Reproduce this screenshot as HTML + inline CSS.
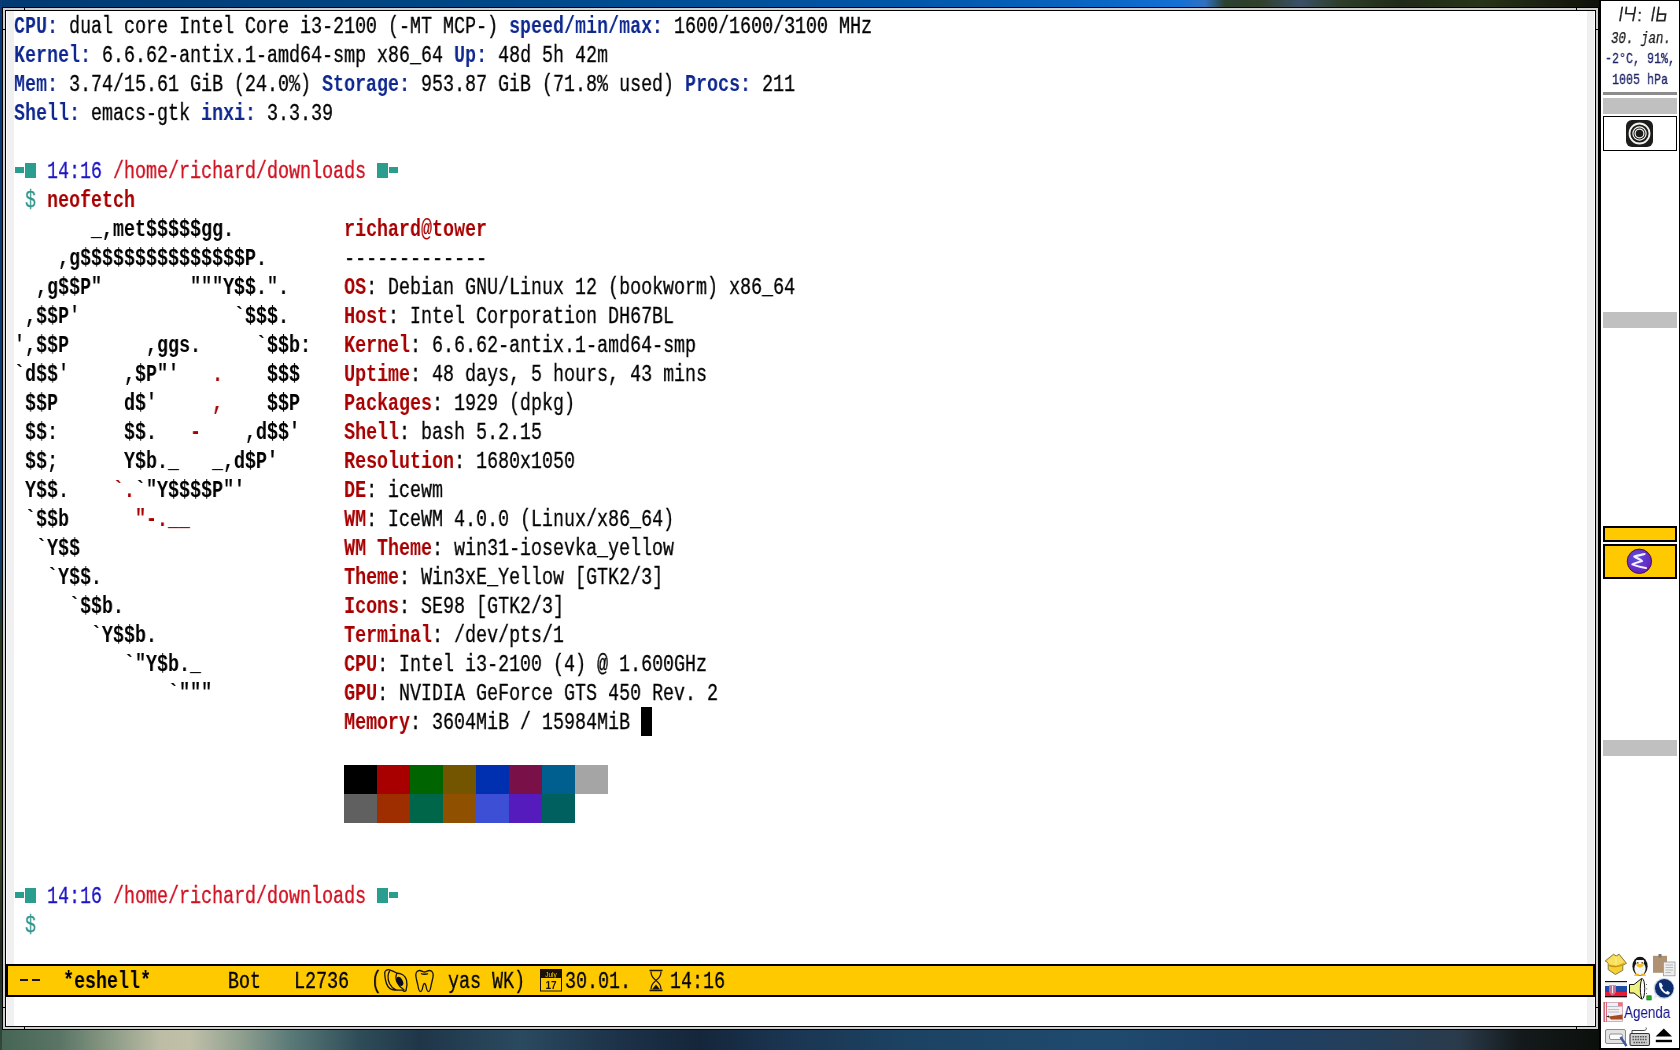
<!DOCTYPE html>
<html><head><meta charset="utf-8"><style>
*{margin:0;padding:0;box-sizing:border-box}
html,body{width:1680px;height:1050px;overflow:hidden;background:#1b2b3b;position:relative}
.abs{position:absolute}
.row{position:absolute;left:14px;height:29px;font-family:"Liberation Mono",monospace;font-size:23.3px;line-height:29px;white-space:pre;transform:scaleX(0.78684);transform-origin:0 0;color:#000;will-change:transform;-webkit-text-stroke:0.3px currentColor}
.lb{color:#0f2890;font-weight:bold}
.n{color:#000}
.tq{color:#26a08c}
.tb{color:#1c14c4}
.pr{color:#d01020}
.dl{color:#2e9488}
.rb{color:#a80000;font-weight:bold}
.ab{color:#000;font-weight:bold}
.pt{font-family:"Liberation Mono",monospace;line-height:18px;white-space:pre;transform-origin:0 0;will-change:transform}
.ar{color:#a80000;font-weight:bold}
.lb,.rb,.ab,.ar,.bd{-webkit-text-stroke:0}
</style></head><body>

<div class="abs" style="left:0;top:0;width:1680px;height:7px;background:linear-gradient(90deg,#023a72 0,#004888 500px,#0056a8 900px,#0a66c4 1100px,#1470d4 1180px,#3070c0 1205px,#2a4030 1225px,#30402a 1260px,#3a5068 1300px,#2e3e2a 1340px,#202a18 1400px,#283418 1480px,#1a2010 1550px,#0e100a 1600px)"></div>
<div class="abs" style="left:0;top:1030px;width:1600px;height:20px;background:linear-gradient(90deg,#456554 0,#5a7565 60px,#8a9a85 110px,#bdbda5 160px,#c0c0a8 190px,#90a090 240px,#5a7a78 290px,#2e4c58 360px,#1f3648 420px,#2a4a60 520px,#1c3248 620px,#14263a 700px,#1a3450 780px,#1c4262 900px,#1f4a6e 1100px,#1e4065 1250px,#243e58 1380px,#2a3a4a 1460px,#141a1c 1520px,#0c100c 1600px)"></div>
<div class="abs" style="left:0;top:0;width:2px;height:1050px;background:linear-gradient(180deg,#0a3a78 0,#0a3a70 550px,#2a3a18 650px,#3a4a20 850px,#202a20 950px,#34483e 1050px)"></div>


<div class="abs" style="left:2px;top:7px;width:1597px;height:1023px;background:#000"></div>
<div class="abs" style="left:3px;top:8px;width:1595px;height:1021px;background:#cfcfcf"></div>
<div class="abs" style="left:5px;top:10px;width:1591px;height:1017px;background:#000"></div>
<div class="abs" style="left:6px;top:11px;width:1589px;height:1015px;background:#fff"></div>
<div class="abs" style="left:24px;top:7px;width:1px;height:4px;background:#000"></div>
<div class="abs" style="left:1576px;top:7px;width:1px;height:4px;background:#000"></div>
<div class="abs" style="left:24px;top:1026px;width:1px;height:4px;background:#000"></div>
<div class="abs" style="left:1576px;top:1026px;width:1px;height:4px;background:#000"></div>
<div class="abs" style="left:2px;top:29px;width:4px;height:1px;background:#000"></div>
<div class="abs" style="left:1595px;top:29px;width:4px;height:1px;background:#000"></div>
<div class="abs" style="left:2px;top:1007px;width:4px;height:1px;background:#000"></div>
<div class="abs" style="left:1595px;top:1007px;width:4px;height:1px;background:#000"></div>
<div class="abs" style="left:7px;top:11px;width:7px;height:953px;background:#f0f0f0"></div>
<div class="abs" style="left:1587px;top:11px;width:7px;height:953px;background:#f0f0f0"></div>
<div class="abs" style="left:7px;top:997px;width:7px;height:29px;background:#f0f0f0"></div>
<div class="abs" style="left:1587px;top:997px;width:7px;height:29px;background:#f0f0f0"></div>
<div class="abs" style="left:641px;top:707px;width:11px;height:29px;background:#000"></div>

<div class="row" style="top:13px"><span class="lb">CPU:</span><span class="n"> dual core Intel Core i3-2100 (-MT MCP-) </span><span class="lb">speed/min/max:</span><span class="n"> 1600/1600/3100 MHz</span></div>
<div class="row" style="top:42px"><span class="lb">Kernel:</span><span class="n"> 6.6.62-antix.1-amd64-smp x86_64 </span><span class="lb">Up:</span><span class="n"> 48d 5h 42m</span></div>
<div class="row" style="top:71px"><span class="lb">Mem:</span><span class="n"> 3.74/15.61 GiB (24.0%) </span><span class="lb">Storage:</span><span class="n"> 953.87 GiB (71.8% used) </span><span class="lb">Procs:</span><span class="n"> 211</span></div>
<div class="row" style="top:100px"><span class="lb">Shell:</span><span class="n"> emacs-gtk </span><span class="lb">inxi:</span><span class="n"> 3.3.39</span></div>
<div class="row" style="top:158px"><span class="n">   </span><span class="tb">14:16</span><span class="n"> </span><span class="pr">/home/richard/downloads</span></div>
<div class="row" style="top:187px"><span class="dl"> $ </span><span class="rb">neofetch</span></div>
<div class="row" style="top:216px"><span class="ab">       _,met$$$$$gg.</span><span class="n">          </span><span class="rb">richard@tower</span></div>
<div class="row" style="top:245px"><span class="ab">    ,g$$$$$$$$$$$$$$$P.</span><span class="n">       </span><span class="n">-------------</span></div>
<div class="row" style="top:274px"><span class="ab">  ,g$$P"        """Y$$.".</span><span class="n">     </span><span class="rb">OS</span><span class="n">: Debian GNU/Linux 12 (bookworm) x86_64</span></div>
<div class="row" style="top:303px"><span class="ab"> ,$$P'              `$$$.</span><span class="n">     </span><span class="rb">Host</span><span class="n">: Intel Corporation DH67BL</span></div>
<div class="row" style="top:332px"><span class="ab">',$$P       ,ggs.     `$$b:</span><span class="n">   </span><span class="rb">Kernel</span><span class="n">: 6.6.62-antix.1-amd64-smp</span></div>
<div class="row" style="top:361px"><span class="ab">`d$$'     ,$P"'   </span><span class="ar">.</span><span class="ab">    $$$</span><span class="n">    </span><span class="rb">Uptime</span><span class="n">: 48 days, 5 hours, 43 mins</span></div>
<div class="row" style="top:390px"><span class="ab"> $$P      d$'     </span><span class="ar">,</span><span class="ab">    $$P</span><span class="n">    </span><span class="rb">Packages</span><span class="n">: 1929 (dpkg)</span></div>
<div class="row" style="top:419px"><span class="ab"> $$:      $$.   </span><span class="ar">-</span><span class="ab">    ,d$$'</span><span class="n">    </span><span class="rb">Shell</span><span class="n">: bash 5.2.15</span></div>
<div class="row" style="top:448px"><span class="ab"> $$;      Y$b._   _,d$P'</span><span class="n">      </span><span class="rb">Resolution</span><span class="n">: 1680x1050</span></div>
<div class="row" style="top:477px"><span class="ab"> Y$$.    </span><span class="ar">`.</span><span class="ab">`"Y$$$$P"'</span><span class="n">         </span><span class="rb">DE</span><span class="n">: icewm</span></div>
<div class="row" style="top:506px"><span class="ab"> `$$b      </span><span class="ar">"-.__</span><span class="n">              </span><span class="rb">WM</span><span class="n">: IceWM 4.0.0 (Linux/x86_64)</span></div>
<div class="row" style="top:535px"><span class="ab">  `Y$$</span><span class="n">                        </span><span class="rb">WM Theme</span><span class="n">: win31-iosevka_yellow</span></div>
<div class="row" style="top:564px"><span class="ab">   `Y$$.</span><span class="n">                      </span><span class="rb">Theme</span><span class="n">: Win3xE_Yellow [GTK2/3]</span></div>
<div class="row" style="top:593px"><span class="ab">     `$$b.</span><span class="n">                    </span><span class="rb">Icons</span><span class="n">: SE98 [GTK2/3]</span></div>
<div class="row" style="top:622px"><span class="ab">       `Y$$b.</span><span class="n">                 </span><span class="rb">Terminal</span><span class="n">: /dev/pts/1</span></div>
<div class="row" style="top:651px"><span class="ab">          `"Y$b._</span><span class="n">             </span><span class="rb">CPU</span><span class="n">: Intel i3-2100 (4) @ 1.600GHz</span></div>
<div class="row" style="top:680px"><span class="ab">              `"""</span><span class="n">            </span><span class="rb">GPU</span><span class="n">: NVIDIA GeForce GTS 450 Rev. 2</span></div>
<div class="row" style="top:709px"><span class="n">                              </span><span class="rb">Memory</span><span class="n">: 3604MiB / 15984MiB </span></div>
<div class="row" style="top:883px"><span class="n">   </span><span class="tb">14:16</span><span class="n"> </span><span class="pr">/home/richard/downloads</span></div>
<div class="row" style="top:912px"><span class="dl"> $</span></div>
<div class="abs" style="left:15px;top:167px;width:9px;height:6px;background:#2a9d8f"></div>
<div class="abs" style="left:25px;top:163px;width:11px;height:15px;background:#2a9d8f"></div>
<div class="abs" style="left:377px;top:163px;width:11px;height:15px;background:#2a9d8f"></div>
<div class="abs" style="left:389px;top:167px;width:9px;height:6px;background:#2a9d8f"></div>
<div class="abs" style="left:15px;top:892px;width:9px;height:6px;background:#2a9d8f"></div>
<div class="abs" style="left:25px;top:888px;width:11px;height:15px;background:#2a9d8f"></div>
<div class="abs" style="left:377px;top:888px;width:11px;height:15px;background:#2a9d8f"></div>
<div class="abs" style="left:389px;top:892px;width:9px;height:6px;background:#2a9d8f"></div>
<div class="abs" style="left:344px;top:765px;width:33px;height:29px;background:#000000"></div>
<div class="abs" style="left:377px;top:765px;width:33px;height:29px;background:#a80000"></div>
<div class="abs" style="left:410px;top:765px;width:33px;height:29px;background:#006400"></div>
<div class="abs" style="left:443px;top:765px;width:33px;height:29px;background:#735500"></div>
<div class="abs" style="left:476px;top:765px;width:33px;height:29px;background:#0030b0"></div>
<div class="abs" style="left:509px;top:765px;width:33px;height:29px;background:#7a1048"></div>
<div class="abs" style="left:542px;top:765px;width:33px;height:29px;background:#005f8f"></div>
<div class="abs" style="left:575px;top:765px;width:33px;height:29px;background:#a5a5a5"></div>
<div class="abs" style="left:344px;top:794px;width:33px;height:29px;background:#606060"></div>
<div class="abs" style="left:377px;top:794px;width:33px;height:29px;background:#9e2d00"></div>
<div class="abs" style="left:410px;top:794px;width:33px;height:29px;background:#00664a"></div>
<div class="abs" style="left:443px;top:794px;width:33px;height:29px;background:#8f5000"></div>
<div class="abs" style="left:476px;top:794px;width:33px;height:29px;background:#3d4fd5"></div>
<div class="abs" style="left:509px;top:794px;width:33px;height:29px;background:#551bbd"></div>
<div class="abs" style="left:542px;top:794px;width:33px;height:29px;background:#005f5f"></div>


<div class="abs" style="left:6px;top:964px;width:1589px;height:33px;background:#ffc900;border:2px solid #000"></div>
<div class="row" style="left:8px;top:968px">     <span class="bd" style="font-weight:bold">*eshell*</span>       Bot   L2736  (</div>
<div class="row" style="left:448px;top:968px">yas WK)</div>
<div class="abs" style="left:20px;top:979px;width:8px;height:2px;background:#1a1208"></div>
<div class="abs" style="left:32px;top:979px;width:8px;height:2px;background:#1a1208"></div>
<div class="row" style="left:565px;top:968px">30.01.</div>
<div class="row" style="left:670px;top:968px">14:16</div>

<svg class="abs" style="left:370px;top:964px" width="310" height="33" viewBox="370 964 310 33">
 <g fill="none" stroke="#1a1208" stroke-width="1.3" stroke-linejoin="round" stroke-linecap="round">
  <!-- shell -->
  <path d="M385 971.5 C386.5 969.3 389 969.3 391 970.3 C393 971 395 972 397 973.3 C401 973 405 975.5 406.5 980 C407.5 984 406.8 988 406 990.5 C405 991.8 403.5 991.5 402.5 990.2 C399 990 395 990.2 392 989.5 C388.5 988.5 386.5 985 385.5 980 C384.8 976 384.5 973 385 971.5 Z"/>
  <path d="M389.8 970.6 C387.6 974 387.6 979 389.5 983.5 C391 986.5 393 988.5 395.5 989.6"/>
  <path d="M397 973.3 C395.6 975.5 395.8 979.5 397.2 982.5 C398.8 986 401.5 988.3 404 989.8"/>
 </g>
 <ellipse cx="399.8" cy="981.3" rx="2.9" ry="4.9" transform="rotate(-28 399.8 981.3)" fill="#0a0a20"/>
 <g fill="none" stroke="#1a1208" stroke-width="1.3" stroke-linejoin="round">
  <!-- tooth -->
  <path d="M419.5 970.5 C416 970.5 415.5 974 416 977 C416.5 980 417.5 983 418 986 C418.5 989 419 991.5 420.5 991.5 C422 991.5 422.5 989 423 986 C423.5 984 424 983.5 424.5 983.5 C425 983.5 425.5 984 426 986 C426.5 989 427 991.5 428.5 991.5 C430 991.5 430.5 989 431 986 C431.5 983 432.5 980 433 977 C433.5 974 433 970.5 429.5 970.5 C427.5 970.5 426 972 424.5 972 C423 972 421.5 970.5 419.5 970.5 Z"/>
  <path d="M421 973.5 C422.5 974.5 426.5 974.5 428 973.5"/>
 </g>
 <!-- calendar -->
 <rect x="540.5" y="969.5" width="21" height="21.5" fill="none" stroke="#1a1208" stroke-width="1"/>
 <rect x="540.5" y="969.5" width="21" height="8.5" fill="#1a1208"/>
 <text x="551" y="976.6" font-family="Liberation Sans" font-size="6.5" fill="#ffc900" text-anchor="middle">July</text>
 <text x="551" y="989.3" font-family="Liberation Sans" font-weight="bold" font-size="10" fill="#1a1208" text-anchor="middle">17</text>
 <!-- hourglass -->
 <path d="M649.5 970.5 H662.5 M649.5 990.5 H662.5" stroke="#1a1208" stroke-width="1.6"/>
 <path d="M651 971.5 C651 978 655 979 655.8 980.5 C655 982 651 983 651 989.5 M661 971.5 C661 978 657 979 656.2 980.5 C657 982 661 983 661 989.5" fill="none" stroke="#1a1208" stroke-width="1.2"/>
 <path d="M652 989.5 L656 984.5 L660 989.5 Z" fill="#1a1208"/>
</svg>


<div class="abs" style="left:1599px;top:0;width:81px;height:1050px;background:#000"></div>
<div class="abs" style="left:1601px;top:1px;width:78px;height:1047px;background:#fff"></div>
<div class="abs" style="left:1603px;top:92px;width:74px;height:3px;background:#8c8c8c"></div>
<div class="abs" style="left:1603px;top:98px;width:74px;height:16px;background:#c0c0c0"></div>
<div class="abs" style="left:1603px;top:116px;width:74px;height:35px;border:1px solid #000;background:#fff"></div>
<div class="abs" style="left:1603px;top:312px;width:74px;height:16px;background:#c0c0c0"></div>
<div class="abs" style="left:1603px;top:526px;width:74px;height:16px;border:2px solid #000;background:#ffc900"></div>
<div class="abs" style="left:1603px;top:544px;width:74px;height:35px;border:2px solid #000;background:#ffc900"></div>
<div class="abs" style="left:1603px;top:740px;width:74px;height:16px;background:#c0c0c0"></div>

<svg class="abs" style="left:1601px;top:0" width="79" height="160" viewBox="1601 0 79 160">
 <g stroke="#262626" stroke-width="1.7" stroke-linecap="round" fill="none">
  <path d="M1622.2 7.3 L1621.2 13.3 M1621.0 14.8 L1620.0 20.6"/>
  <path d="M1626.5 7.3 L1625.8 13.5 L1634.3 13.8 M1635.3 7.3 L1634.5 13.3 M1634.1 14.8 L1633.0 20.6"/>
  <path d="M1654.4 7.3 L1653.2 13.3 M1653.0 14.8 L1652.0 20.6"/>
  <path d="M1658.8 7.3 L1656.9 20.6 L1664.6 20.6 L1665.6 14.2 L1658.0 14.2"/>
 </g>
 <g fill="#2a2a2a"><rect x="1638.8" y="11.8" width="2" height="2"/><rect x="1638.4" y="19.3" width="2" height="2"/></g>
 <rect x="1626" y="120" width="27" height="27" rx="6" fill="#1c1c1c"/>
 <circle cx="1639.5" cy="133.5" r="10" fill="none" stroke="#f4f4ee" stroke-width="1.8"/>
 <circle cx="1639.5" cy="133.5" r="6.6" fill="none" stroke="#f4f4ee" stroke-width="1.2"/>
 <circle cx="1639.5" cy="133.5" r="4.4" fill="none" stroke="#f4f4ee" stroke-width="1.2"/>
</svg>
<div class="abs pt" style="left:1611px;top:30px;font-style:italic;font-size:16px;transform:scaleX(0.78);color:#1a1a1a;-webkit-text-stroke:0.25px currentColor">30. jan.</div>
<div class="abs pt" style="left:1605px;top:51px;font-size:15px;transform:scaleX(0.778);color:#1e2266;-webkit-text-stroke:0.35px currentColor">-2°C, 91%,</div>
<div class="abs pt" style="left:1612px;top:72px;font-size:15px;transform:scaleX(0.778);color:#1e2266;-webkit-text-stroke:0.35px currentColor">1005 hPa</div>
<svg class="abs" style="left:1601px;top:540px" width="79" height="45" viewBox="1601 540 79 45">
 <defs><radialGradient id="eg" cx="0.4" cy="0.35" r="0.7"><stop offset="0" stop-color="#5a52d8"/><stop offset="1" stop-color="#6a1cc0"/></radialGradient></defs>
 <circle cx="1639.4" cy="561.3" r="12.2" fill="url(#eg)" stroke="#3a1040" stroke-width="0.9"/>
 <path d="M1644.6 554 C1641 554.8 1637 555.6 1634.3 556.6 C1637 558 1640 559.5 1642 561 C1638.5 562 1635 563 1632.4 564.4 C1636 566 1641 567.2 1646 568" fill="none" stroke="#f6f0ff" stroke-width="2.1" stroke-linejoin="round" stroke-linecap="round"/>
</svg>
<svg class="abs" style="left:1601px;top:945px" width="79" height="104" viewBox="1601 945 79 104">
 <!-- yellow box -->
 <path d="M1605.2 960.9 L1613.6 954.2 L1616.1 956 L1619.1 954.2 L1626.5 963.4 L1622.8 965.1 L1622.8 970.3 L1615.4 974.5 L1608.2 969.6 L1608.2 962.9 Z" fill="#f4d030" stroke="#8a7a40" stroke-width="1"/>
 <path d="M1607 961 L1613.6 955.5 L1616 957 L1619 955.5 L1624.5 962.5 L1616 965.5 L1609 964 Z" fill="#fae060"/>
 <path d="M1609 965.3 Q1615.5 967.8 1622.5 965" fill="none" stroke="#c89010" stroke-width="1.3"/>
 <path d="M1616 956.5 L1616 965.5" stroke="#fff290" stroke-width="0.9"/>
 <path d="M1618 966 L1624 963" stroke="#e0a020" stroke-width="0.9"/>
 <!-- penguin -->
 <ellipse cx="1640" cy="966.3" rx="7.6" ry="9.6" fill="#151515"/>
 <ellipse cx="1640" cy="968.6" rx="5.6" ry="6.9" fill="#f6f6f6"/>
 <ellipse cx="1640" cy="961.6" rx="4.2" ry="2.6" fill="#f6f6f6"/>
 <path d="M1640 957 C1637 957 1635.5 958.5 1635.5 960 L1644.5 960 C1644.5 958.5 1643 957 1640 957 Z" fill="#151515"/>
 <circle cx="1637.8" cy="962.8" r="0.9" fill="#7a4a10"/><circle cx="1642.2" cy="962.8" r="0.9" fill="#7a4a10"/>
 <path d="M1636 964.6 C1638 963.8 1642 963.8 1644 964.6 C1643 966.8 1641.5 967.5 1640 967.5 C1638.5 967.5 1637 966.8 1636 964.6 Z" fill="#f0c020"/>
 <path d="M1634 975.8 C1634.5 973.8 1636.5 973.2 1639 974 L1639 975.8 Z M1646 975.8 C1645.5 973.8 1643.5 973.2 1641 974 L1641 975.8 Z" fill="#f0b010"/>
 <!-- clipboard -->
 <rect x="1653" y="955.8" width="14" height="17" fill="#b09272"/>
 <rect x="1658.5" y="954" width="3" height="3.5" fill="#777"/>
 <rect x="1663.5" y="962" width="11.5" height="13.8" fill="#eeeeee" stroke="#999" stroke-width="0.8"/>
 <path d="M1665.5 965 H1673 M1665.5 967.5 H1673 M1665.5 970 H1673 M1665.5 972.5 H1671" stroke="#aaa" stroke-width="0.8"/>
 <!-- flag -->
 <rect x="1605" y="981" width="22" height="1.2" fill="#111"/>
 <rect x="1605" y="983" width="22" height="3" fill="#f2f4f2"/>
 <rect x="1605" y="986" width="22" height="6" fill="#1c4ca8"/>
 <rect x="1605" y="992" width="22" height="4" fill="#e41c34"/>
 <rect x="1605" y="996" width="22" height="1.3" fill="#200008"/>
 <path d="M1609 985 H1616 V991 C1616 994 1612.5 995.5 1612.5 995.5 C1612.5 995.5 1609 994 1609 991 Z" fill="#e07890" opacity="0.85"/>
 <path d="M1612.5 986 V993" stroke="#f8e8f0" stroke-width="1"/>
 <!-- speaker -->
 <path d="M1629.5 984.5 H1634 L1641.5 978.5 V999 L1634 993 H1629.5 Z" fill="#eef080" stroke="#111" stroke-width="1"/>
 <ellipse cx="1642.5" cy="988.8" rx="2.2" ry="10" fill="#fafafa" stroke="#111" stroke-width="1"/>
 <path d="M1646.5 984 v0.8 M1646.7 988.5 v0.8 M1646.5 993 v0.8" stroke="#333" stroke-width="1"/>
 <rect x="1646.8" y="995.8" width="4.4" height="4.2" fill="#20b020" stroke="#0a6a0a" stroke-width="0.6"/>
 <!-- phone -->
 <circle cx="1664" cy="988.6" r="10.5" fill="#c8d0e0"/>
 <circle cx="1664.3" cy="988.3" r="9.3" fill="#0c2c6c"/>
 <path d="M1659.5 982.5 C1658.5 984 1659 987 1661.5 990.5 C1664 993.5 1667 995 1668.8 994.5 L1670 992.8 L1667.5 990.8 L1666 992 C1664.5 991.3 1662.5 989 1661.8 987.3 L1663 986 L1661.3 983 Z" fill="#f2f4fa"/>
 <path d="M1655 994 L1654 999 L1659 996" fill="#e8eaf4"/>
 <!-- agenda icon -->
 <rect x="1603.5" y="1002.5" width="19" height="19" fill="#f4eef0" stroke="#c8a0a8" stroke-width="0.8"/>
 <path d="M1604.5 1002 V1022 M1606.5 1002 V1022" stroke="#d06070" stroke-width="0.9"/>
 <rect x="1618" y="1002.5" width="4.5" height="4" fill="#f07080"/>
 <path d="M1607 1006.5 H1620 M1608 1009.5 H1619 M1608 1012 H1619" stroke="#b0b8c8" stroke-width="0.9"/>
 <path d="M1608.5 1016.5 L1622.5 1014.5 L1622.5 1019.5 L1611 1019.5 Z" fill="#a84a20"/>
 <path d="M1606 1016.5 L1609 1015.5 L1609 1017.5 Z" fill="#222"/>
 <!-- window rename icon -->
 <rect x="1605.5" y="1029.5" width="20" height="14" rx="1.5" fill="#e2e2e2" stroke="#8a8a8a" stroke-width="1"/>
 <rect x="1609.5" y="1034" width="13" height="5.5" rx="1.5" fill="#fcfcfc" stroke="#888" stroke-width="0.9"/>
 <path d="M1620.5 1037 L1626.5 1046" stroke="#3a5a9a" stroke-width="2.4"/>
 <!-- keyboard -->
 <rect x="1630" y="1033.5" width="19.5" height="12" rx="1.5" fill="#d0d0d0" stroke="#333" stroke-width="1.1"/>
 <path d="M1632.5 1036.8 H1647.5 M1632.5 1039.6 H1647.5 M1633.5 1042.4 H1646.5" stroke="#555" stroke-width="1.5" stroke-dasharray="1.6 0.9"/>
 <path d="M1632 1033 V1030.5 H1643 C1646 1030.5 1647 1029 1646 1027.5" fill="none" stroke="#444" stroke-width="1"/>
 <!-- eject -->
 <path d="M1663.8 1028.5 L1672 1036.6 L1655.6 1036.6 Z" fill="#000"/>
 <rect x="1655.8" y="1039.8" width="16.2" height="2.4" fill="#000"/>
</svg>
<div class="abs" style="left:1624px;top:1004px;font-family:'Liberation Sans',sans-serif;font-size:16px;line-height:18px;color:#10108a;transform:scaleX(0.84);transform-origin:0 0;white-space:pre;will-change:transform">Agenda</div>

</body></html>
